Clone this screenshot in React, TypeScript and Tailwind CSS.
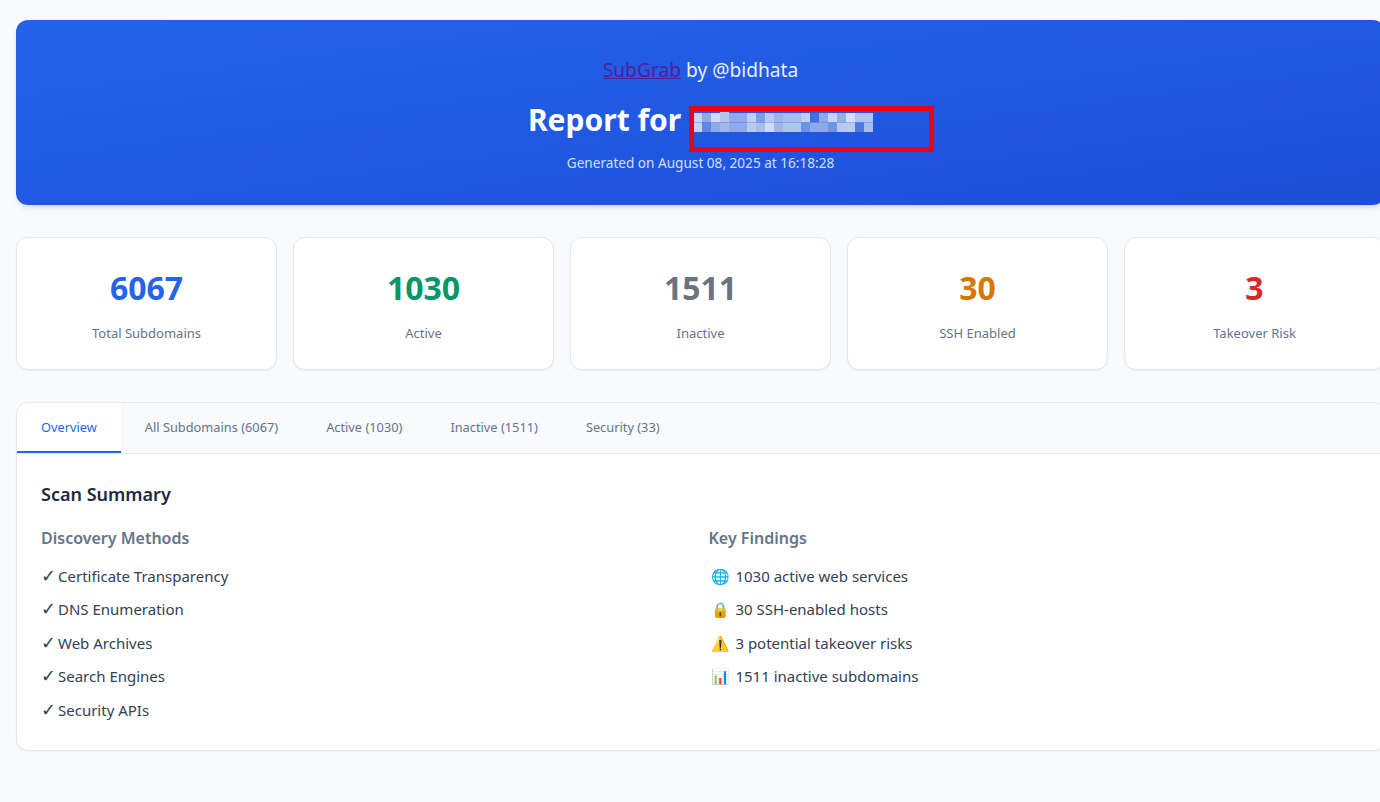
const stats = [
  { value: "6067", label: "Total Subdomains", color: "text-[#2563eb]" },
  { value: "1030", label: "Active", color: "text-[#059669]" },
  { value: "1511", label: "Inactive", color: "text-[#6b7280]" },
  { value: "30", label: "SSH Enabled", color: "text-[#d97706]" },
  { value: "3", label: "Takeover Risk", color: "text-[#dc2626]" },
];

const tabs = ["Overview", "All Subdomains (6067)", "Active (1030)", "Inactive (1511)", "Security (33)"];

const methods = ["Certificate Transparency", "DNS Enumeration", "Web Archives", "Search Engines", "Security APIs"];

const findings = [
  { icon: "🌐", text: "1030 active web services" },
  { icon: "🔒", text: "30 SSH-enabled hosts" },
  { icon: "⚠️", text: "3 potential takeover risks" },
  { icon: "📊", text: "1511 inactive subdomains" },
];

// pixelated domain name in the title
const mosaic = [
  ["#c5d3f5", "#8fa9e8", "#d0dcf7", "#b0c4f0", "#8fa9ea", "#8fa9ea", "#c0d0f4", "#7f9ce6", "#b8caf2", "#9db3ec", "#a8bcee", "#a8bcee", "#c0d0f4", "#3f6fde", "#8fa9e8", "#c8d6f6", "#94aeea", "#d5e0f8", "#afc2f0", "#afc2f0"],
  ["#c5d3f5", "#5f86e2", "#8fa9e8", "#a0b6ec", "#8fa9ea", "#8fa9ea", "#b8caf2", "#a8bcee", "#d0dcf7", "#a0b6ec", "#b0c4f0", "#b0c4f0", "#6f93e4", "#8fa9e8", "#8fa9e8", "#6f93e4", "#b8caf2", "#b8caf2", "#4f7ae0", "#a8bcee"],
];

function Mosaic() {
  return (
    <svg width="180" height="20" className="ml-1 inline-block -translate-y-px">
      <rect x="27" y="0" width="9" height="1" fill="#b0c4f0" />
      {mosaic.map((row, r) =>
        row.map((fill, c) => <rect key={`${r}-${c}`} x={c * 9} y={1 + r * 9.5} width="9" height="9.5" fill={fill} />)
      )}
    </svg>
  );
}

export default function App() {
  return (
    <div className="min-h-[802px] overflow-hidden bg-[#f8fafc] font-['Noto_Sans','DejaVu_Sans',sans-serif] text-[#1e293b]">
      <div className="w-[1401px] px-4 pt-5">
        <header className="relative rounded-xl bg-gradient-to-br from-[#2563eb] to-[#1d4ed8] pt-9 pb-[31px] text-center text-white shadow-md">
          <p className="text-[1.2rem] leading-7 opacity-90"><a href="#" className="text-[#551a8b] underline">SubGrab</a> by @bidhata</p>
          <h1 className="mt-3 text-3xl leading-[1.6] font-bold">Report for <Mosaic /></h1>
          <p className="mt-2 text-[0.85rem] leading-[1.65] opacity-80">Generated on August 08, 2025 at 16:18:28</p>
          <div className="absolute top-[86px] left-[673px] h-[46px] w-[245px] border-[5px] border-[#e30613]" />
        </header>

        <div className="mt-8 grid grid-cols-5 gap-4">
          {stats.map((s) => (
            <div key={s.label} className="rounded-xl border border-slate-200 bg-white py-6 text-center shadow-xs">
              <div className={`text-[2rem] leading-[1.6] font-bold ${s.color}`}>{s.value}</div>
              <div className="mt-2 text-[13px] leading-[1.8] text-[#64748b]">{s.label}</div>
            </div>
          ))}
        </div>

        <div className="mt-8 rounded-xl border border-slate-200 bg-white shadow-xs">
          <div className="flex overflow-hidden rounded-t-xl border-b border-slate-200 bg-[#f8fafc]">
            {tabs.map((t, i) => (
              <div
                key={t}
                className={
                  i === 0
                    ? "border-b-2 border-[#2563eb] bg-white px-6 py-3.5 text-[0.8rem] leading-5 text-[#2563eb]"
                    : "border-b-2 border-transparent px-6 py-3.5 text-[0.8rem] leading-5 text-[#64748b]"
                }
              >
                {t}
              </div>
            ))}
          </div>
          <div className="px-6 pt-6 pb-[26px]">
            <h2 className="text-lg leading-8 font-semibold">Scan Summary</h2>
            <div className="mt-4 grid grid-cols-2 gap-4">
              <div>
                <h3 className="leading-[1.6] font-semibold text-[#64748b]">Discovery Methods</h3>
                <ul className="mt-3 space-y-2 text-[15px] leading-[25.6px] text-[#334155]">
                  {methods.map((m) => (
                    <li key={m}><span className="-mr-0.5 text-lg leading-none">✓</span> {m}</li>
                  ))}
                </ul>
              </div>
              <div>
                <h3 className="leading-[1.6] font-semibold text-[#64748b]">Key Findings</h3>
                <ul className="mt-3 space-y-2 text-[15px] leading-[25.6px] text-[#334155]">
                  {findings.map((f) => (
                    <li key={f.text}><span className="mx-0.5">{f.icon}</span> {f.text}</li>
                  ))}
                </ul>
              </div>
            </div>
          </div>
        </div>
      </div>
    </div>
  );
}
